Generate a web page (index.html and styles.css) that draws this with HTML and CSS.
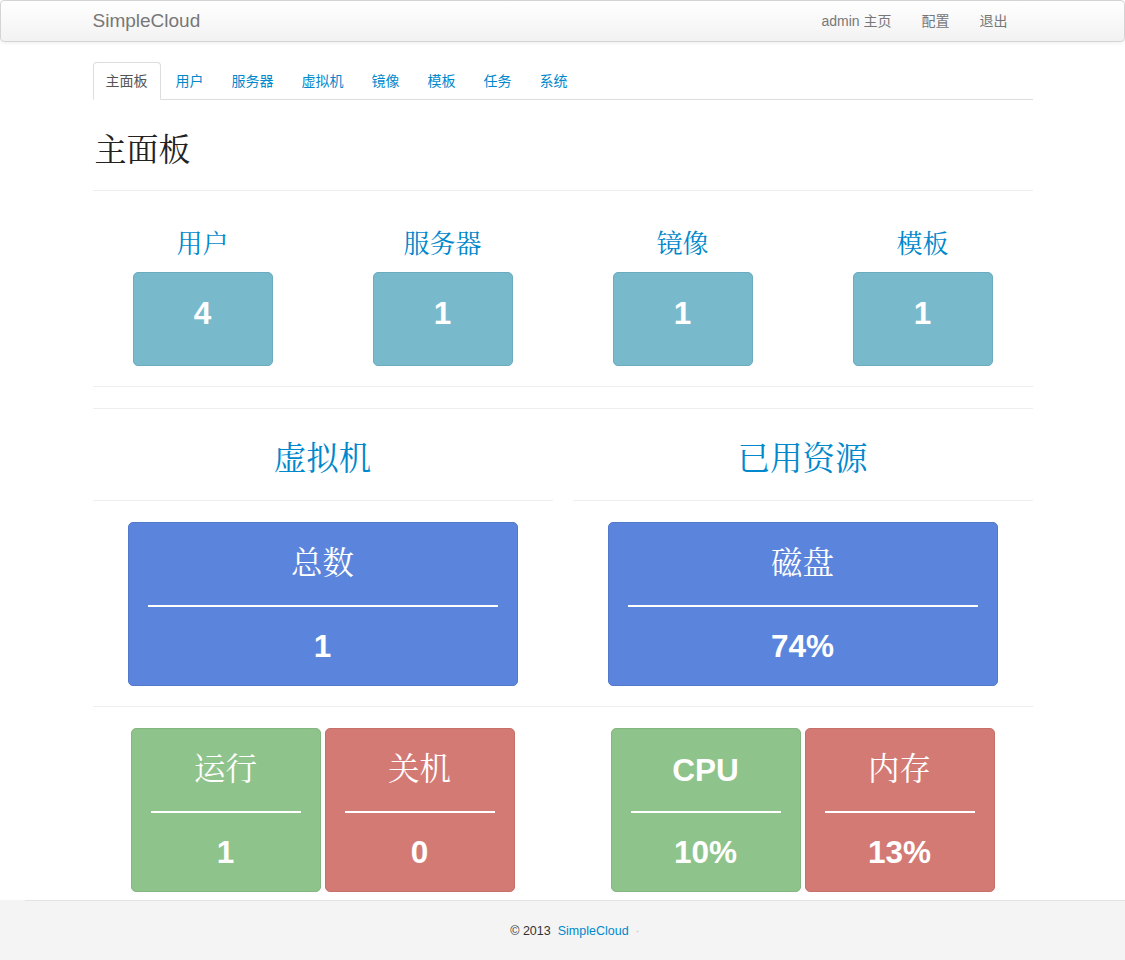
FILE: index.html
```html
<!DOCTYPE html>
<html lang="zh-CN">
<head>
<meta charset="utf-8">
<title>SimpleCloud</title>
<link rel="stylesheet" href="styles.css">
</head>
<body>
<div class="navbar">
  <div class="container nav-inner">
    <a class="brand" href="#">SimpleCloud</a>
    <ul class="nav-right">
      <li><a href="#">admin 主页</a></li>
      <li><a href="#">配置</a></li>
      <li><a href="#">退出</a></li>
    </ul>
  </div>
</div>

<div class="container">
  <ul class="tabs">
    <li class="active"><a href="#">主面板</a></li>
    <li><a href="#">用户</a></li>
    <li><a href="#">服务器</a></li>
    <li><a href="#">虚拟机</a></li>
    <li><a href="#">镜像</a></li>
    <li><a href="#">模板</a></li>
    <li><a href="#">任务</a></li>
    <li><a href="#">系统</a></li>
  </ul>

  <div class="page-header"><h1>主面板</h1></div>

  <div class="row4">
    <div class="stat">
      <h3 class="stat-title">用户</h3>
      <div class="stat-box">4</div>
    </div>
    <div class="stat">
      <h3 class="stat-title">服务器</h3>
      <div class="stat-box">1</div>
    </div>
    <div class="stat">
      <h3 class="stat-title">镜像</h3>
      <div class="stat-box">1</div>
    </div>
    <div class="stat">
      <h3 class="stat-title">模板</h3>
      <div class="stat-box">1</div>
    </div>
  </div>

  <hr class="sep">
  <hr class="sep sep2">

  <div class="row2">
    <div class="col">
      <div class="sub-header"><h2>虚拟机</h2></div>
      <div class="card card-blue card-wide">
        <div class="card-title">总数</div>
        <div class="card-line"></div>
        <div class="card-value">1</div>
      </div>
    </div>
    <div class="col">
      <div class="sub-header"><h2>已用资源</h2></div>
      <div class="card card-blue card-wide">
        <div class="card-title">磁盘</div>
        <div class="card-line"></div>
        <div class="card-value">74%</div>
      </div>
    </div>
  </div>

  <hr class="sep sep3">

  <div class="row2">
    <div class="col pair">
      <div class="card card-green card-small">
        <div class="card-title">运行</div>
        <div class="card-line"></div>
        <div class="card-value">1</div>
      </div>
      <div class="card card-red card-small">
        <div class="card-title">关机</div>
        <div class="card-line"></div>
        <div class="card-value">0</div>
      </div>
    </div>
    <div class="col pair">
      <div class="card card-green card-small">
        <div class="card-title latin">CPU</div>
        <div class="card-line"></div>
        <div class="card-value">10%</div>
      </div>
      <div class="card card-red card-small">
        <div class="card-title">内存</div>
        <div class="card-line"></div>
        <div class="card-value">13%</div>
      </div>
    </div>
  </div>
</div>

<footer class="footer">
  <div class="footer-inner">
    <span class="copy">© 2013</span>
    <a href="#" class="footer-link">SimpleCloud</a>
    <span class="dot">·</span>
  </div>
</footer>
</body>
</html>
```

FILE: styles.css
```css
* { box-sizing: border-box; }

html, body {
  margin: 0;
  padding: 0;
  background: #fff;
}

body {
  font-family: "Liberation Sans", Arial, "Noto Sans CJK SC", sans-serif;
  font-size: 14px;
  line-height: 20px;
  color: #333;
}

a { text-decoration: none; }

.container {
  width: 940px;
  margin: 0 auto;
}

/* navbar */
.navbar {
  height: 42px;
  border: 1px solid #d4d4d4;
  border-radius: 4px;
  background: linear-gradient(to bottom, #ffffff, #f2f2f2);
  box-shadow: 0 1px 4px rgba(0, 0, 0, 0.065);
  margin-bottom: 20px;
}

.nav-inner {
  display: flex;
  align-items: center;
  justify-content: space-between;
  height: 40px;
}

.brand {
  color: #777;
  font-size: 19px;
  line-height: 20px;
}

.nav-right {
  list-style: none;
  margin: 0 10px 0 0;
  padding: 0;
  display: flex;
}

.nav-right a {
  display: block;
  padding: 10px 15px;
  color: #777;
  font-size: 14px;
  line-height: 20px;
}

/* tabs */
.tabs {
  list-style: none;
  margin: 0 0 20px;
  padding: 0;
  display: flex;
  border-bottom: 1px solid #ddd;
}

.tabs li {
  margin-bottom: -1px;
  margin-right: 2px;
}

.tabs a {
  display: block;
  padding: 8px 12px;
  line-height: 20px;
  border: 1px solid transparent;
  border-radius: 4px 4px 0 0;
  color: #0088cc;
  font-size: 14px;
}

.tabs .active a {
  color: #555;
  background: #fff;
  border-color: #ddd #ddd transparent;
}

/* page header */
.page-header {
  display: flow-root;
  padding-bottom: 10px;
  border-bottom: 1px solid #eee;
  margin-bottom: 31px;
}

.page-header h1 {
  margin: 7px 0 13px 2px;
  font-size: 32px;
  line-height: 40px;
  font-weight: normal;
  color: #222;
  font-family: "Noto Serif CJK SC", "Noto Sans CJK SC", serif;
}

/* top stats */
.row4 {
  display: grid;
  grid-template-columns: repeat(4, 220px);
  column-gap: 20px;
}

.stat {
  display: flex;
  flex-direction: column;
  align-items: center;
}

.stat-title {
  margin: 0 0 10px;
  font-size: 26px;
  line-height: 40px;
  font-weight: normal;
  color: #0088cc;
  font-family: "Noto Serif CJK SC", "Noto Sans CJK SC", serif;
}

.stat-box {
  width: 140px;
  height: 94px;
  border: 1px solid #6aabbf;
  border-radius: 5px;
  background: #79b9cc;
  color: #fff;
  text-align: center;
  padding-top: 20px;
  font-size: 31.5px;
  line-height: 40px;
  font-weight: bold;
}

/* separators */
.sep {
  margin: 20px 0 0;
  border: 0;
  border-top: 1px solid #eee;
  border-bottom: 1px solid #fff;
  height: 0;
}

.sep2 { margin-top: 20px; }

.sep3 { margin: 20px 0; }

/* two-column rows */
.row2 {
  display: grid;
  grid-template-columns: 460px 460px;
  column-gap: 20px;
}

.col {
  display: flex;
  flex-direction: column;
  align-items: center;
}

.sub-header {
  display: flow-root;
  align-self: stretch;
  margin-top: 0;
  padding-bottom: 9px;
  border-bottom: 1px solid #eee;
  margin-bottom: 21px;
  text-align: center;
}

.sub-header h2 {
  margin: 26px 0 15px;
  font-size: 32.5px;
  line-height: 40px;
  font-weight: normal;
  color: #0088cc;
  font-family: "Noto Serif CJK SC", "Noto Sans CJK SC", serif;
}

.pair {
  flex-direction: row;
  justify-content: center;
  gap: 4px;
}

/* cards */
.card {
  border-radius: 5px;
  padding: 16px 19px 0;
  color: #fff;
  text-align: center;
  height: 164px;
}

.card-wide { width: 390px; }
.card-small { width: 190px; }

.card-blue {
  background: #5b85dc;
  border: 1px solid #5379cc;
}

.card-green {
  background: #8fc38c;
  border: 1px solid #84b681;
}

.card-red {
  background: #d37a75;
  border: 1px solid #c5706b;
}

.card-title {
  font-family: "Noto Serif CJK SC", "Noto Sans CJK SC", serif;
  font-size: 31.5px;
  line-height: 44px;
  margin-bottom: 22px;
}

.card-title.latin {
  font-family: "Liberation Sans", Arial, sans-serif;
  font-weight: bold;
  font-size: 31.5px;
  margin-top: 3px;
  margin-bottom: 19px;
}

.card-line {
  height: 2px;
  background: #fff;
  margin-bottom: 19px;
}

.card-value {
  font-size: 31.5px;
  line-height: 40px;
  font-weight: bold;
}

/* footer */
.footer {
  margin-top: 8px;
  background: #f4f4f4;
  height: 80px;
}

.footer-inner {
  margin-left: 25px;
  border-top: 1px solid #e3e3e3;
  padding-top: 21px;
  display: flex;
  justify-content: center;
  gap: 7px;
  font-size: 12.5px;
  line-height: 18px;
}

.copy { color: #333; }

.footer-link { color: #0088cc; }

.dot { color: #e0b0b0; }
```
